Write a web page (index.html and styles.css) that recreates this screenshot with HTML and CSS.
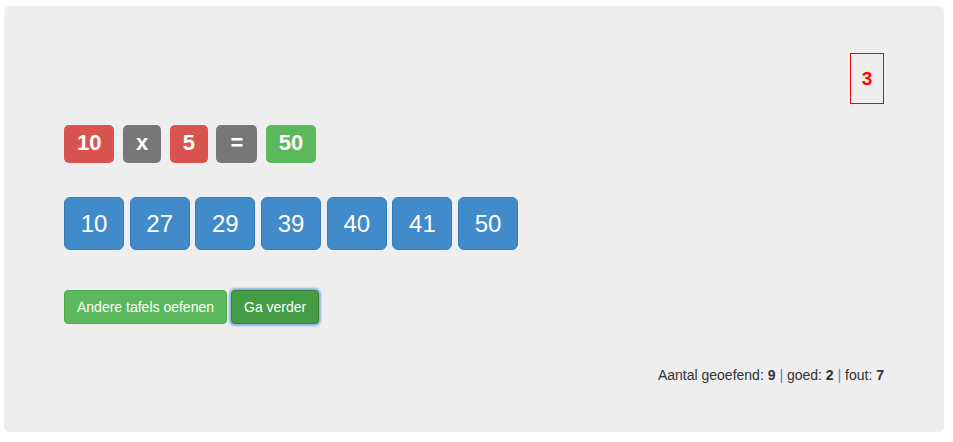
FILE: index.html
```html
<!DOCTYPE html>
<html>
<head>
<meta charset="utf-8">
<link rel="stylesheet" href="styles.css">
</head>
<body>
<div class="panel">
  <div class="count-row"><div class="count">3</div></div>
  <div class="sum">
    <span class="lbl lbl-red">10</span>
    <span class="lbl lbl-gray">x</span>
    <span class="lbl lbl-red">5</span>
    <span class="lbl lbl-gray lbl-eq">=</span>
    <span class="lbl lbl-green">50</span>
  </div>
  <div class="answers">
    <button class="ans">10</button>
    <button class="ans">27</button>
    <button class="ans">29</button>
    <button class="ans">39</button>
    <button class="ans">40</button>
    <button class="ans">41</button>
    <button class="ans">50</button>
  </div>
  <div class="actions">
    <button class="act">Andere tafels oefenen</button>
    <button class="act act-focus">Ga verder</button>
  </div>
  <div class="stats">Aantal geoefend: <b>9</b> <span class="sep">|</span> goed: <b>2</b> <span class="sep">|</span> fout: <b>7</b></div>
</div>
</body>
</html>
```
FILE: styles.css
```css
html, body { margin: 0; padding: 0; background: #fff; }
body { font-family: "Liberation Sans", Arial, Helvetica, sans-serif; color: #333; font-size: 14px; }
.panel {
  box-sizing: border-box;
  margin: 6px 0 0 4px;
  width: 940px;
  height: 426px;
  background: #eee;
  border-radius: 6px;
  padding: 47px 60px 0 60px;
}
.count-row { display: flex; justify-content: flex-end; }
.count {
  box-sizing: border-box;
  width: 34px; height: 51px;
  border: 1px solid #f00;
  color: #f00;
  font-weight: bold;
  font-size: 19px;
  display: flex; align-items: center; justify-content: center;
}
.sum { display: flex; gap: 8.5px; margin-top: 21px; }
.lbl {
  display: inline-block;
  color: #fff;
  font-weight: bold;
  font-size: 22px;
  line-height: 27px;
  padding: 4px 13px 7px;
  border-radius: 5px;
  text-align: center;
}
.lbl-eq { padding-left: 14px; padding-right: 14px; }
.lbl-red { background: #d9534f; }
.lbl-gray { background: #777; }
.lbl-green { background: #5cb85c; }
.answers { display: flex; gap: 5.7px; margin-top: 34px; }
.ans {
  box-sizing: border-box;
  width: 60px; height: 53px;
  background: #428bca;
  border: 1px solid #357ebd;
  border-radius: 6px;
  color: #fff;
  font-family: inherit;
  font-size: 24px;
  padding: 0;
}
.actions { display: flex; gap: 4px; margin-top: 40px; }
.act {
  box-sizing: border-box;
  height: 34px;
  padding: 0 12px;
  background: #5cb85c;
  border: 1px solid #4cae4c;
  border-radius: 4px;
  color: #fff;
  font-family: inherit;
  font-size: 14px;
}
.act-focus {
  background: #449d44;
  border-color: #398439;
  box-shadow: 0 0 2px 2px rgba(110, 160, 230, 0.75);
}
.stats { text-align: right; margin-top: 41px; line-height: 20px; }
.stats b { font-weight: bold; }
.sep { color: #428bca; }
```
